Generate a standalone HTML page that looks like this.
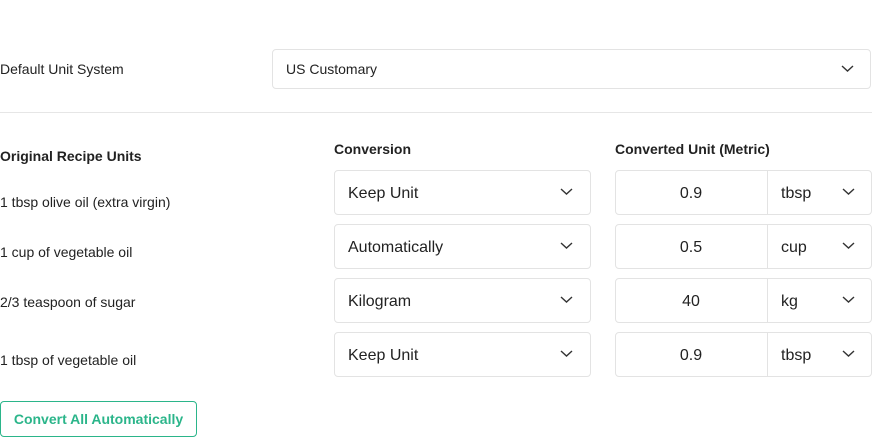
<!DOCTYPE html>
<html><head><style>
body{margin:0;width:872px;height:437px;background:#fff;font-family:"Liberation Sans",sans-serif;color:#222;position:relative;overflow:hidden}
.a{position:absolute;white-space:nowrap}
.box{position:absolute;border:1px solid #e3e3e3;border-radius:4px;box-sizing:border-box;background:#fff}
.chev{position:absolute;width:13px;height:7px}
.lbl{font-size:14px}
.sel{font-size:16px}
</style></head><body>
<div class="a lbl" style="left:0;top:61px">Default Unit System</div>
<div class="box" style="left:272px;top:49px;width:599px;height:40px"></div>
<div class="a" style="left:286px;top:61px;font-size:14px">US Customary</div>
<svg class="chev" style="left:841px;top:65px" viewBox="0 0 13 7"><path d="M1 1l5.5 5 5.5-5" fill="none" stroke="#333" stroke-width="1.4"/></svg>
<div class="a" style="left:0;top:112px;width:872px;height:1px;background:#e6e6e6"></div>
<div class="a" style="left:0;top:148px;font-size:14px;font-weight:bold">Original Recipe Units</div>
<div class="a" style="left:334px;top:141px;font-size:14px;font-weight:bold">Conversion</div>
<div class="a" style="left:615px;top:141px;font-size:14px;font-weight:bold">Converted Unit (Metric)</div>

<div class="a lbl" style="left:0;top:194px">1 tbsp olive oil (extra virgin)</div>
<div class="a lbl" style="left:0;top:244px">1 cup of vegetable oil</div>
<div class="a lbl" style="left:0;top:294px">2/3 teaspoon of sugar</div>
<div class="a lbl" style="left:0;top:352px">1 tbsp of vegetable oil</div>

<div class="box" style="left:334px;top:170px;width:257px;height:45px"></div>
<div class="box" style="left:334px;top:224px;width:257px;height:45px"></div>
<div class="box" style="left:334px;top:278px;width:257px;height:45px"></div>
<div class="box" style="left:334px;top:332px;width:257px;height:45px"></div>
<div class="a sel" style="left:348px;top:185px">Keep Unit</div>
<div class="a sel" style="left:348px;top:239px">Automatically</div>
<div class="a sel" style="left:348px;top:293px">Kilogram</div>
<div class="a sel" style="left:348px;top:347px">Keep Unit</div>

<div class="box" style="left:615px;top:170px;width:257px;height:45px"></div>
<div class="box" style="left:615px;top:224px;width:257px;height:45px"></div>
<div class="box" style="left:615px;top:278px;width:257px;height:45px"></div>
<div class="box" style="left:615px;top:332px;width:257px;height:45px"></div>
<div class="a" style="left:767px;top:171px;width:1px;height:43px;background:#e3e3e3"></div>
<div class="a" style="left:767px;top:225px;width:1px;height:43px;background:#e3e3e3"></div>
<div class="a" style="left:767px;top:279px;width:1px;height:43px;background:#e3e3e3"></div>
<div class="a" style="left:767px;top:333px;width:1px;height:43px;background:#e3e3e3"></div>
<div class="a sel" style="left:615px;width:152px;text-align:center;top:185px">0.9</div>
<div class="a sel" style="left:615px;width:152px;text-align:center;top:239px">0.5</div>
<div class="a sel" style="left:615px;width:152px;text-align:center;top:293px">40</div>
<div class="a sel" style="left:615px;width:152px;text-align:center;top:347px">0.9</div>
<div class="a sel" style="left:781px;top:185px">tbsp</div>
<div class="a sel" style="left:781px;top:239px">cup</div>
<div class="a sel" style="left:781px;top:293px">kg</div>
<div class="a sel" style="left:781px;top:347px">tbsp</div>

<svg class="chev" style="left:560px;top:188px" viewBox="0 0 13 7"><path d="M1 1l5.5 5 5.5-5" fill="none" stroke="#333" stroke-width="1.4"/></svg>
<svg class="chev" style="left:560px;top:242px" viewBox="0 0 13 7"><path d="M1 1l5.5 5 5.5-5" fill="none" stroke="#333" stroke-width="1.4"/></svg>
<svg class="chev" style="left:560px;top:296px" viewBox="0 0 13 7"><path d="M1 1l5.5 5 5.5-5" fill="none" stroke="#333" stroke-width="1.4"/></svg>
<svg class="chev" style="left:560px;top:350px" viewBox="0 0 13 7"><path d="M1 1l5.5 5 5.5-5" fill="none" stroke="#333" stroke-width="1.4"/></svg>
<svg class="chev" style="left:842px;top:188px" viewBox="0 0 13 7"><path d="M1 1l5.5 5 5.5-5" fill="none" stroke="#333" stroke-width="1.4"/></svg>
<svg class="chev" style="left:842px;top:242px" viewBox="0 0 13 7"><path d="M1 1l5.5 5 5.5-5" fill="none" stroke="#333" stroke-width="1.4"/></svg>
<svg class="chev" style="left:842px;top:296px" viewBox="0 0 13 7"><path d="M1 1l5.5 5 5.5-5" fill="none" stroke="#333" stroke-width="1.4"/></svg>
<svg class="chev" style="left:842px;top:350px" viewBox="0 0 13 7"><path d="M1 1l5.5 5 5.5-5" fill="none" stroke="#333" stroke-width="1.4"/></svg>

<div class="box" style="left:0;top:401px;width:197px;height:36px;border-color:#2bb58a;border-radius:4px"></div>
<div class="a" style="left:0;top:411px;width:197px;text-align:center;font-size:14px;font-weight:bold;color:#2bb58a">Convert All Automatically</div>
</body></html>
